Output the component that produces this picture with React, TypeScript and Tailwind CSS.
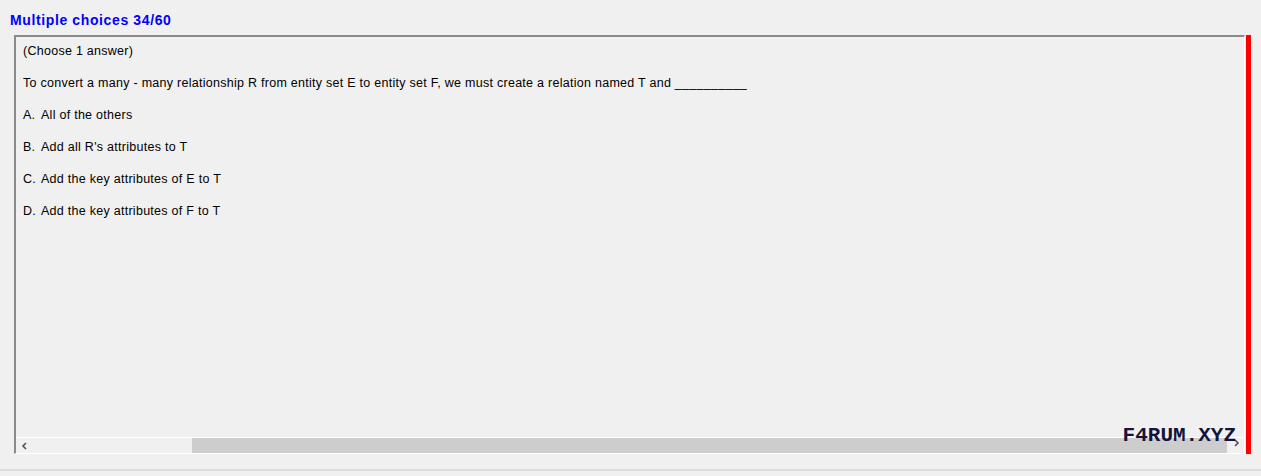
import React from "react";

const options = [
  { key: "A.", text: "All of the others" },
  { key: "B.", text: "Add all R's attributes to T" },
  { key: "C.", text: "Add the key attributes of E to T" },
  { key: "D.", text: "Add the key attributes of F to T" },
];

const App: React.FC = () => {
  return (
    <div className="w-[1261px] h-[476px] bg-[#f0f0f0] overflow-hidden font-['Liberation_Sans',Arial,sans-serif] text-black">
      <div className="pl-[10px] pt-[12px] h-[35px] text-[14px] tracking-[0.62px] font-bold text-[#0000ff] leading-[16px]">
        Multiple choices 34/60
      </div>

      <div className="flex ml-[14px]">
        <div className="relative w-[1231px] h-[419px] border-t-2 border-l-2 border-t-[#8a8a8a] border-l-[#8a8a8a] border-r border-b border-r-white border-b-white flex flex-col">
          <div className="flex-1 pl-[7px] pt-[7px] text-[12.5px] tracking-[0.27px] leading-[15px]">
            <div>(Choose 1 answer)</div>
            <div className="mt-[17px]">
              To convert a many - many relationship R from entity set E to entity set F, we must create a relation named T and __________
            </div>
            {options.map((o) => (
              <div key={o.key} className="mt-[17px] flex">
                <span className="w-[18px]">{o.key}</span>
                <span>{o.text}</span>
              </div>
            ))}
          </div>

          <div className="h-[16px] flex items-stretch bg-[#f0f0f0] border-t border-t-white">
            <div className="w-[176px] flex items-center pl-[5px]">
              <svg width="8" height="8" viewBox="0 0 8 8">
                <path d="M5 1 L2 4 L5 7" stroke="#505050" strokeWidth="1.6" fill="none" />
              </svg>
            </div>
            <div className="w-[1035px] bg-[#cdcdcd]" />
            <div className="flex-1 flex items-start justify-center pt-[1px]">
              <svg width="8" height="8" viewBox="0 0 8 8">
                <path d="M3 1 L6 4 L3 7" stroke="#505050" strokeWidth="1.6" fill="none" />
              </svg>
            </div>
          </div>

          <div className="absolute right-[8px] bottom-[7px] font-['Liberation_Mono',monospace] font-bold text-[21px] leading-[21px] text-[#14143c]">
            F4RUM.XYZ
          </div>
        </div>
        <div className="ml-[1px] w-[5px] h-[419px] bg-[#ff0000]" />
      </div>

      <div className="mt-[15px] h-[2px] bg-[#dcdcdc]" />
    </div>
  );
};

export default App;
